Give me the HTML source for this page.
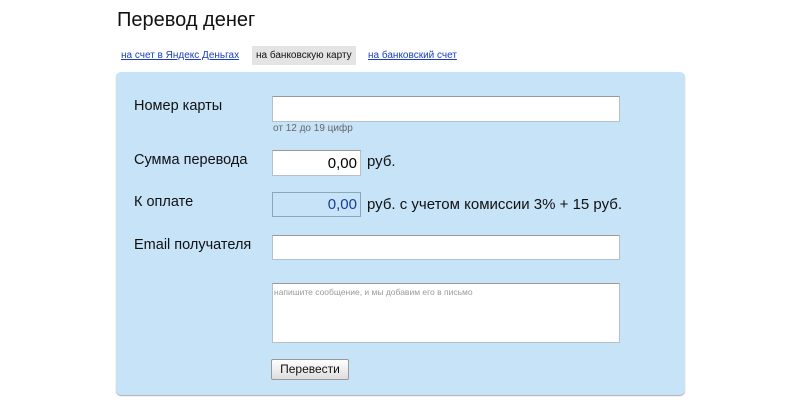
<!DOCTYPE html>
<html><head><meta charset="utf-8"><style>
body{margin:0;width:800px;height:400px;background:#fff;font-family:"Liberation Sans",Arial,sans-serif;position:relative;overflow:hidden}
.a{position:absolute}
h1{position:absolute;left:117px;top:9px;margin:0;font-weight:normal;font-size:20px;color:#111}
.tab{position:absolute;top:49px;font-size:10px;color:#1a3dc1;text-decoration:underline;line-height:13px}
.sel{background:#e4e4e4;color:#111;text-decoration:none;padding:3px 4px;top:46px}
.panel{position:absolute;left:116px;top:72px;width:569px;height:323px;background:#c7e3f8;border-radius:5px;box-shadow:0 1px 1px #aaa}
.lbl{position:absolute;left:134px;font-size:14.5px;color:#111}
.inp{position:absolute;background:#fff;border:1px solid #b5c0c8;border-top-color:#999;box-sizing:border-box}
.t{position:absolute;font-size:15px;color:#111}
</style></head><body>
<h1>Перевод денег</h1>
<span class="tab" style="left:121px">на счет в Яндекс Деньгах</span>
<span class="tab sel" style="left:252px">на банковскую карту</span>
<span class="tab" style="left:368px">на банковский счет</span>
<div class="panel"></div>
<div class="lbl" style="top:98px">Номер карты</div>
<div class="inp" style="left:272px;top:96px;width:348px;height:26px"></div>
<div class="a" style="left:273px;top:123px;font-size:10px;color:#666">от 12 до 19 цифр</div>
<div class="lbl" style="top:152px">Сумма перевода</div>
<div class="inp" style="left:272px;top:150px;width:89px;height:26px;text-align:right;padding:4px 3px 0 0;font-size:15px">0,00</div>
<div class="t" style="left:367px;top:153px">руб.</div>
<div class="lbl" style="top:194px">К оплате</div>
<div class="inp" style="left:272px;top:192px;width:89px;height:25px;background:#c7e3f8;border-color:#8ea6bb;text-align:right;padding:3px 3px 0 0;font-size:15px;color:#1a3d9c">0,00</div>
<div class="t" style="left:367px;top:196px">руб. с учетом комиссии 3% + 15 руб.</div>
<div class="lbl" style="top:237px">Email получателя</div>
<div class="inp" style="left:272px;top:235px;width:348px;height:25px"></div>
<div class="inp" style="left:272px;top:283px;width:348px;height:60px;font-size:8.5px;color:#999;padding:3px 0 0 1px">напишите сообщение, и мы добавим его в письмо</div>
<div class="a" style="left:271px;top:359px;width:76px;height:19px;border:1px solid #999;border-radius:2px;background:linear-gradient(#fff,#ddd);font-size:12px;text-align:center;line-height:19px;color:#111">Перевести</div>
</body></html>
